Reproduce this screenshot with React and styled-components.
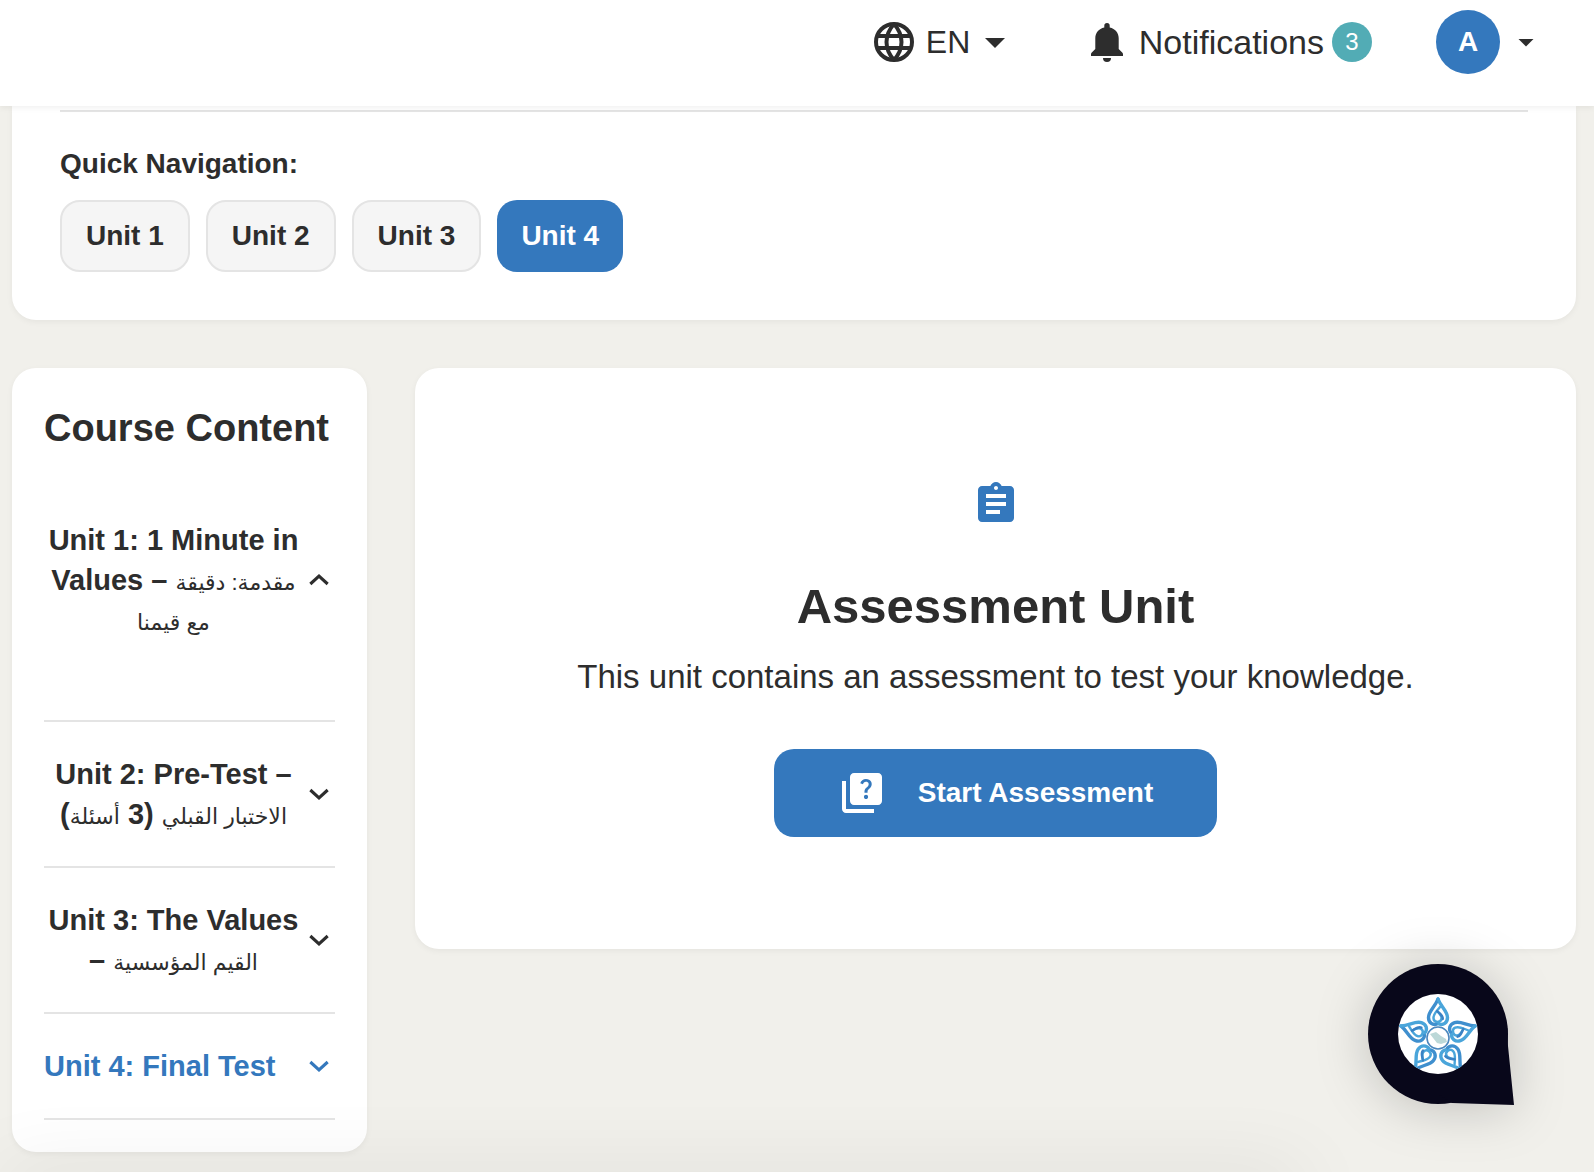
import React, { useState } from "react";
import styled, { createGlobalStyle } from "styled-components";
import { MdArrowDropDown, MdAssignment, MdQuiz } from "react-icons/md";

const color = {
  page: "#f1f0eb",
  card: "#ffffff",
  text: "#2d2d2d",
  line: "#e4e4e4",
  chip: "#f5f5f5",
  blue: "#3478bd",
  teal: "#52acb5",
  navy: "#08071a",
};

const GlobalStyle = createGlobalStyle`
  *, *::before, *::after { box-sizing: border-box; }
  body {
    margin: 0;
    background: ${color.page};
    color: ${color.text};
    font-family: "Liberation Sans", "Helvetica Neue", Arial, "DejaVu Sans", sans-serif;
    font-size: 28px;
    line-height: 40px;
    -webkit-font-smoothing: antialiased;
  }
  button, select { font: inherit; color: inherit; }
  h1, h2, p { margin: 0; }
`;

const TopBar = styled.header`
  position: sticky;
  top: 0;
  z-index: 2;
  display: flex;
  align-items: center;
  justify-content: flex-end;
  gap: 64px;
  height: 106px;
  padding: 0 50px 22px;
  background: ${color.card};
  box-shadow: 0 2px 6px rgba(0, 0, 0, 0.06);
`;

const LanguagePicker = styled.label`
  display: flex;
  align-items: center;
  gap: 8px;
`;

const PickerField = styled.span`
  display: flex;
  align-items: center;
`;

const LanguageSelect = styled.select`
  appearance: none;
  border: 0;
  padding: 0;
  background: transparent;
  font-size: 32px;
  cursor: pointer;
`;

const BarButton = styled.button`
  display: flex;
  align-items: center;
  gap: 8px;
  padding: 0;
  border: 0;
  background: transparent;
  font-size: 34px;
  cursor: pointer;
`;

const Badge = styled.span`
  display: grid;
  place-items: center;
  width: 40px;
  height: 40px;
  border-radius: 50%;
  background: ${color.teal};
  color: #fff;
  font-size: 24px;
`;

const Avatar = styled.span`
  display: grid;
  place-items: center;
  width: 64px;
  height: 64px;
  border-radius: 50%;
  background: ${color.blue};
  color: #fff;
  font-size: 28px;
  font-weight: 700;
`;

const Page = styled.main`
  display: grid;
  gap: 48px;
  padding: 0 18px 20px 12px;
`;

const Card = styled.section`
  background: ${color.card};
  border-radius: 24px;
  box-shadow: 0 2px 6px rgba(0, 0, 0, 0.05);
`;

const NavCard = styled(Card)`
  border-radius: 0 0 24px 24px;
  padding: 4px 48px 48px;
`;

const NavBody = styled.div`
  display: grid;
  gap: 16px;
  padding-top: 32px;
  border-top: 2px solid ${color.line};
`;

const NavTitle = styled.p`
  font-weight: 700;
`;

const Chips = styled.nav`
  display: flex;
  flex-wrap: wrap;
  gap: 16px;
`;

const Chip = styled.button`
  height: 72px;
  padding: 0 24px;
  border: ${(p) => (p.$active ? "0" : `2px solid ${color.line}`)};
  border-radius: 20px;
  background: ${(p) => (p.$active ? color.blue : color.chip)};
  color: ${(p) => (p.$active ? "#fff" : color.text)};
  font-weight: 700;
  cursor: pointer;
`;

const Columns = styled.div`
  display: grid;
  grid-template-columns: 355px minmax(0, 1fr);
  align-items: start;
  gap: 48px;
`;

const Sidebar = styled(Card)`
  padding: 32px;
`;

const SidebarTitle = styled.h2`
  margin-bottom: 32px;
  font-size: 38px;
  line-height: 56px;
  white-space: nowrap;
`;

const UnitItem = styled.div`
  border-bottom: 2px solid ${color.line};
  padding-bottom: ${(p) => (p.$open ? "48px" : "0")};
`;

const UnitToggle = styled.button`
  display: flex;
  align-items: center;
  justify-content: space-between;
  width: 100%;
  padding: 32px 0;
  border: 0;
  background: transparent;
  color: ${(p) => (p.$active ? color.blue : color.text)};
  font-size: 29px;
  font-weight: 700;
  text-align: center;
  cursor: pointer;
`;

const Arabic = styled.span`
  font-size: 22px;
  font-weight: 400;
  line-height: 1;
`;

const ChevronIcon = styled.svg`
  flex: none;
  width: 32px;
  height: 32px;
  fill: none;
  stroke: currentColor;
  stroke-width: 2.3;
  transform: ${(p) => (p.$open ? "rotate(180deg)" : "none")};
`;

const Assessment = styled(Card)`
  display: flex;
  flex-direction: column;
  align-items: center;
  padding: 112px 48px;
  text-align: center;
`;

const AssessmentTitle = styled.h1`
  margin: 48px 0 16px;
  font-size: 49px;
  line-height: 60px;
`;

const AssessmentText = styled.p`
  margin-bottom: 48px;
  font-size: 33px;
  line-height: 49px;
`;

const StartButton = styled.button`
  display: flex;
  align-items: center;
  gap: 32px;
  height: 88px;
  padding: 0 64px;
  border: 0;
  border-radius: 20px;
  background: ${color.blue};
  color: #fff;
  font-weight: 700;
  cursor: pointer;
`;

const ChatButton = styled.button`
  position: fixed;
  right: 80px;
  bottom: 66px;
  z-index: 3;
  padding: 0;
  border: 0;
  background: transparent;
  cursor: pointer;

  svg {
    display: block;
    filter: drop-shadow(0 4px 26px rgba(0, 0, 0, 0.2));
  }
`;

const BottomShade = styled.div`
  position: fixed;
  left: 0;
  right: 290px;
  bottom: -40px;
  height: 40px;
  box-shadow: 0 0 80px rgba(0, 0, 0, 0.09);
  pointer-events: none;
`;

const GlobeIcon = () => (
  <svg width="48" height="48" viewBox="0 0 48 48" fill="none" stroke="currentColor" strokeWidth="4" aria-hidden="true">
    <circle cx="24" cy="24" r="18" />
    <path d="M24 6C14 17 14 31 24 42M24 6C34 17 34 31 24 42" />
    <path d="M7 18H41M7 30H41" />
  </svg>
);

const BellIcon = () => (
  <svg width="48" height="48" viewBox="0 0 48 48" fill="currentColor" aria-hidden="true">
    <path d="M21.3 7.7a2.7 2.7 0 0 1 5.4 0V9.4C32.2 10.6 35.7 14.8 35.7 20.2V31L39.2 34.6Q40 35.4 40 36.4V38H8V36.4Q8 35.4 8.8 34.6L12.3 31V20.2C12.3 14.8 15.8 10.6 21.3 9.4Z" />
    <path d="M20 40H28A4 4 0 0 1 20 40Z" />
  </svg>
);

const Chevron = ({ open }) => (
  <ChevronIcon $open={open} viewBox="0 0 24 24" aria-hidden="true">
    <path d="m5.5 9 6.5 6 6.5-6" />
  </ChevronIcon>
);

const Petal = ({ angle }) => (
  <g transform={`rotate(${angle})`} fill="none" strokeWidth="3.4" strokeLinecap="round">
    <path d="M0-39C-3-31-9.5-27-9.5-20.5C-9.5-15-5-12.5-1-14" stroke="#3f8fce" />
    <path d="M0-39C3-31 9.5-27 9.5-20.5C9.5-15 5-12.5 1-14" stroke="#4aa5da" />
    <path d="M2-31C-1-27-5-24-4.5-19.5C-4-15 3-15 3.5-19.5C4-22 1-25-1-27" stroke="#4aa5da" strokeWidth="2.4" />
    <path d="M-1-27C2-24 5-23 4.8-19" stroke="#3a82c4" strokeWidth="2.4" />
  </g>
);

const ChatMark = () => (
  <svg width="146" height="142" viewBox="0 0 146 142" overflow="visible" aria-hidden="true">
    <defs>
      <clipPath id="mark-disc">
        <circle cx="70" cy="70" r="40" />
      </clipPath>
    </defs>
    <circle cx="70" cy="70" r="70" fill={color.navy} />
    <path d="M139.5 64L140 82L146 141L84 139L70 130Z" fill={color.navy} />
    <circle cx="70" cy="70" r="40" fill="#fff" />
    <g clipPath="url(#mark-disc)">
      <g transform="translate(70 74)">
        {[0, 72, 144, 216, 288].map((angle) => (
          <Petal key={angle} angle={angle} />
        ))}
        <circle r="11" fill="#fff" stroke="#4b86bd" strokeWidth="1.6" />
        <path d="M-8-4L-2-6L3-2L8 1L9 4L3 6L-1 5Z" fill="#bcd8d8" />
      </g>
    </g>
  </svg>
);

const units = [
  {
    id: 1,
    label: (
      <>
        <span>Unit 1: 1 Minute in</span> <span>Values –</span> <Arabic>مقدمة: دقيقة</Arabic>{" "}
        <Arabic>مع قيمنا</Arabic>
      </>
    ),
  },
  {
    id: 2,
    label: (
      <>
        Unit 2: Pre-Test – <Arabic>الاختبار القبلي</Arabic> (3 <Arabic>أسئلة</Arabic>)&rlm;
      </>
    ),
  },
  {
    id: 3,
    label: (
      <>
        <span>Unit 3: The Values</span> <span>–</span> <Arabic>القيم المؤسسية</Arabic>
      </>
    ),
  },
  { id: 4, label: "Unit 4: Final Test" },
];

export default function App() {
  const [active, setActive] = useState(4);
  const [openUnit, setOpenUnit] = useState(1);

  return (
    <>
      <GlobalStyle />
      <TopBar>
        <LanguagePicker>
          <GlobeIcon />
          <PickerField>
            <LanguageSelect aria-label="Language" defaultValue="EN">
              <option>EN</option>
            </LanguageSelect>
            <MdArrowDropDown size={48} aria-hidden="true" />
          </PickerField>
        </LanguagePicker>
        <BarButton type="button">
          <BellIcon />
          Notifications
          <Badge>3</Badge>
        </BarButton>
        <BarButton type="button" aria-label="Account menu">
          <Avatar>A</Avatar>
          <MdArrowDropDown size={36} aria-hidden="true" />
        </BarButton>
      </TopBar>

      <Page>
        <NavCard>
          <NavBody>
            <NavTitle>Quick Navigation:</NavTitle>
            <Chips aria-label="Quick navigation">
              {units.map(({ id }) => (
                <Chip key={id} type="button" $active={id === active} onClick={() => setActive(id)}>
                  Unit {id}
                </Chip>
              ))}
            </Chips>
          </NavBody>
        </NavCard>

        <Columns>
          <Sidebar as="aside">
            <SidebarTitle>Course Content</SidebarTitle>
            {units.map(({ id, label }) => (
              <UnitItem key={id} $open={id === openUnit}>
                <UnitToggle
                  type="button"
                  $active={id === active}
                  aria-expanded={id === openUnit}
                  onClick={() => setOpenUnit(id === openUnit ? null : id)}
                >
                  <span>{label}</span>
                  <Chevron open={id === openUnit} />
                </UnitToggle>
              </UnitItem>
            ))}
          </Sidebar>

          <Assessment>
            <MdAssignment size={48} color={color.blue} aria-hidden="true" />
            <AssessmentTitle>Assessment Unit</AssessmentTitle>
            <AssessmentText>This unit contains an assessment to test your knowledge.</AssessmentText>
            <StartButton type="button">
              <MdQuiz size={48} aria-hidden="true" />
              Start Assessment
            </StartButton>
          </Assessment>
        </Columns>
      </Page>

      <BottomShade />
      <ChatButton type="button" aria-label="Open chat">
        <ChatMark />
      </ChatButton>
    </>
  );
}
